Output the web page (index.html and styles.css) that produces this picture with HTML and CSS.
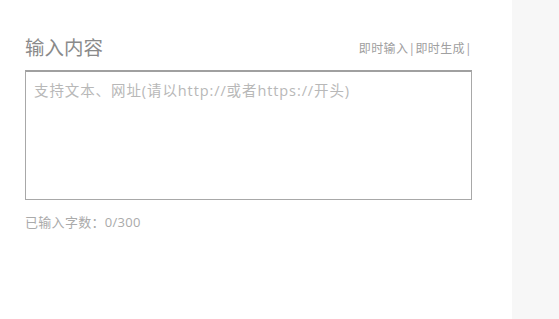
FILE: index.html
```html
<!DOCTYPE html>
<html lang="zh-CN">
<head>
<meta charset="utf-8">
<link rel="stylesheet" href="styles.css">
</head>
<body>
<div class="page">
  <main class="main">
    <div class="head">
      <h1 class="title">输入内容</h1>
      <span class="mode">即时输入|即时生成|</span>
    </div>
    <textarea class="box" placeholder="支持文本、网址(请以http://或者https://开头)"></textarea>
    <div class="count">已输入字数：0/300</div>
  </main>
  <aside class="side"></aside>
</div>
</body>
</html>
```
FILE: styles.css
```css
html, body {
  margin: 0;
  padding: 0;
  background: #fff;
  font-family: "Open Sans", "Noto Sans CJK SC", sans-serif;
}
.page {
  display: flex;
  height: 319px;
}
.main {
  width: 512px;
  padding: 34px 0 0 25px;
  box-sizing: border-box;
}
.side {
  flex: 1;
  background: #f7f7f7;
}
.head {
  width: 447px;
  display: flex;
  justify-content: space-between;
  align-items: center;
  height: 28px;
}
.title {
  margin: 0;
  font-size: 19.5px;
  font-weight: normal;
  color: #8a8a8a;
  line-height: 28px;
}
.mode {
  font-size: 12px;
  color: #a0a0a0;
  letter-spacing: 0.4px;
}
.box {
  display: block;
  margin-top: 8px;
  width: 447px;
  height: 130px;
  box-sizing: border-box;
  border: 1px solid #a8a8a8;
  border-top: 2px solid #a0a0a0;
  padding: 7px 8px;
  resize: none;
  font-family: "Open Sans", "Noto Sans CJK SC", sans-serif;
  font-size: 14.5px;
  letter-spacing: 0.9px;
  outline: none;
}
.box::placeholder {
  color: #b8b8b8;
}
.count {
  margin-top: 12px;
  font-size: 13px;
  letter-spacing: 0.3px;
  color: #aaa;
}
```
